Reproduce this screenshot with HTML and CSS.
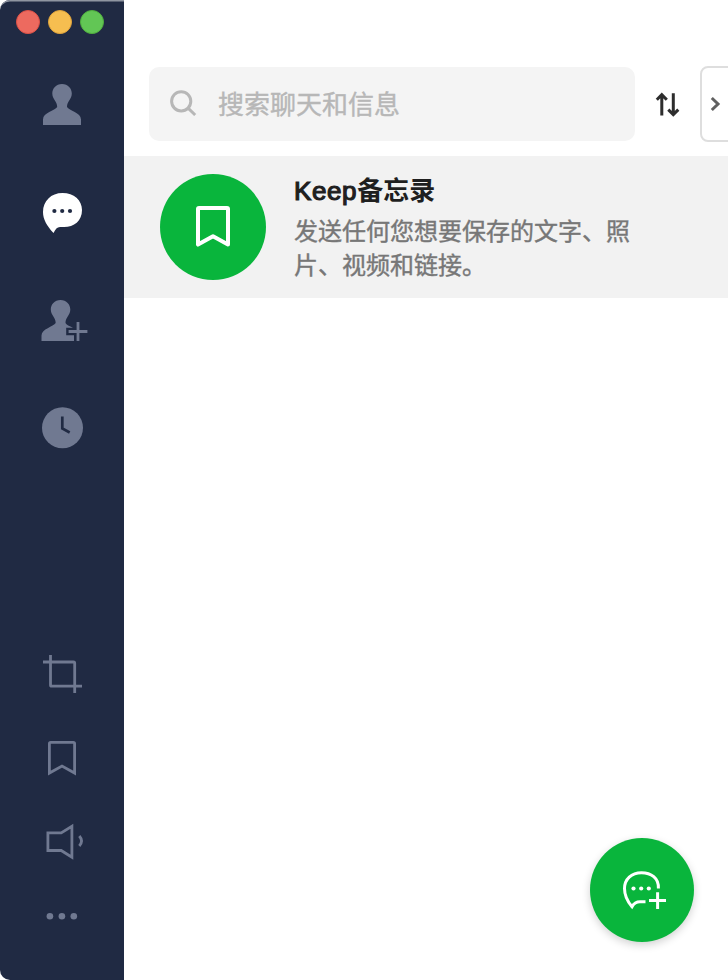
FILE: index.html
```html
<!DOCTYPE html>
<html lang="zh-CN">
<head>
<meta charset="utf-8">
<title>聊天</title>
<link rel="stylesheet" href="styles.css">
</head>
<body>
<div class="window">
  <aside class="sidebar">
    <div class="controls">
      <span class="dot close"></span><span class="dot minimize"></span><span class="dot expand"></span>
    </div>
    <nav class="nav">
      <svg class="icon" width="124" height="90" viewBox="0 60 124 90"><path class="fill" d="M62 84C68 84 71.800 88.500 71.800 93.500C71.800 99 67 101.500 67 107C69 110.500 81 112.500 81 119.500V125H43V119.500C43 112.500 55 110.500 57.200 107C57.200 101.500 52.300 99 52.300 93.500C52.300 88.500 56 84 62 84Z"/></svg>
      <svg class="icon" width="124" height="110" viewBox="0 150 124 110"><path fill="#fff" d="M62.500 193C74 193 82 200 82 210C82 221 74 227 64 227H60C57 227 55.500 229 53.500 233C47 226 43 219.500 43 212C43 201 51 193 62.500 193Z"/><g class="cut"><circle cx="54.400" cy="211" r="2.100"/><circle cx="62.200" cy="211" r="2.100"/><circle cx="70" cy="211" r="2.100"/></g></svg>
      <svg class="icon" width="124" height="120" viewBox="0 260 124 120"><path class="fill" d="M60.500 300C66.500 300 70.300 304.500 70.300 309.500C70.300 315 65.500 317.500 65.500 323C66.200 324.800 69.500 326 73 327.800H66.200V335.200H74V341H41.500V335.500C41.500 329 53.500 326.500 55.700 323C55.700 317.500 50.800 315 50.800 309.500C50.800 304.500 54.500 300 60.500 300Z"/><path class="line" d="M68.600 331.500H87.400M78 322V341"/></svg>
      <svg class="icon" width="124" height="100" viewBox="0 380 124 100"><circle class="fill" cx="62.500" cy="427.800" r="20.500"/><path class="hands" d="M62.300 416.500V428.500L69.700 432.500"/></svg>
    </nav>
    <div class="tools">
      <svg class="icon" width="124" height="80" viewBox="0 640 124 80"><path class="line" d="M43 662H73.500Q74.700 662 74.700 663.200V693M50.500 655V685Q50.500 686.200 51.700 686.200H82"/></svg>
      <svg class="icon" width="124" height="80" viewBox="0 720 124 80"><path class="line" d="M50.700 742.300H73.300Q74.600 742.300 74.600 743.600V773L62 766L49.400 773V743.600Q49.400 742.300 50.700 742.300Z"/></svg>
      <svg class="icon" width="124" height="80" viewBox="0 800 124 80"><path class="line" d="M47.900 832.900H61.200L71.900 826.300V857.300L61.200 850.500H47.900Z"/><path class="line" d="M79.300 836Q83.800 841 79.300 846"/></svg>
      <svg class="icon" width="124" height="100" viewBox="0 880 124 100"><g class="fill"><circle cx="49.900" cy="916.200" r="3.300"/><circle cx="61.900" cy="916.200" r="3.300"/><circle cx="73.800" cy="916.200" r="3.300"/></g></svg>
    </div>
  </aside>
  <main class="main">
    <header class="toolbar">
      <div class="search">
        <svg width="30" height="30" viewBox="168 88 30 30"><g fill="none" stroke="#b7b7b7" stroke-width="3"><circle cx="181.200" cy="101.300" r="9.600"/><path d="M187.800 107.900L195.200 115"/></g></svg>
        <span class="placeholder">搜索聊天和信息</span>
      </div>
      <svg class="sort" width="26" height="28" viewBox="655 90 26 28"><path fill="none" stroke="#2d2d2d" stroke-width="3" d="M661.800 115.500V95M656.800 99.700L661.800 94.700L666.800 99.700M673.300 93.200V114M668.300 109.600L673.300 114.600L678.300 109.600"/></svg>
      <div class="panel-toggle"><svg width="12" height="16" viewBox="709 96 12 16"><path fill="none" stroke="#606060" stroke-width="3" d="M711.800 98L718 104L711.800 110"/></svg></div>
    </header>
    <section class="chat">
      <div class="avatar"><svg width="40" height="46" viewBox="193 204 40 46"><path fill="none" stroke="#fff" stroke-width="4" stroke-linejoin="round" d="M199 208H227Q228 208 228 209V244.600L213 236.200L198 244.600V209Q198 208 199 208Z"/></svg></div>
      <div class="summary">
        <h1><span class="latin">Keep</span>备忘录</h1>
        <p>发送任何您想要保存的文字、照<br>片、视频和链接。</p>
      </div>
    </section>
    <button class="new-chat" aria-label="新聊天"><svg width="50" height="46" viewBox="617 867 50 46"><path fill="none" stroke="#fff" stroke-width="3" d="M658.400 888.500C659 878 651 872.700 641.500 872.700C631.500 872.700 624.500 879 624.500 888.500C624.500 896 627.500 901.500 632 906.700C634 903 636.500 901.700 640 901.700H645.500M649 900.500H666M657.600 892.300V909"/><g fill="#fff"><circle cx="633.500" cy="888.500" r="2.100"/><circle cx="641.200" cy="888.500" r="2.100"/><circle cx="648.800" cy="888.500" r="2.100"/></g></svg></button>
  </main>
</div>
</body>
</html>
```
FILE: styles.css
```css
* { box-sizing: border-box; }
body { margin: 0; background: #fff; font-family: "Liberation Sans", "Noto Sans CJK SC", sans-serif; }
.window { display: flex; width: 728px; height: 980px; overflow: hidden; }
.sidebar { display: flex; flex-direction: column; width: 124px; flex: none; background: #202a43; border-radius: 10px 0 0 10px; box-shadow: inset 0 2px 0 -0.5px #8f95a1; }
.controls { display: flex; gap: 8px; height: 60px; padding: 10px 0 0 16px; }
.dot { width: 24px; height: 24px; border-radius: 50%; border: 1px solid; }
.close { background: #ed6a5f; border-color: #dc5046; }
.minimize { background: #f6be50; border-color: #dfa33b; }
.expand { background: #62c655; border-color: #50ae3e; }
.nav, .tools { display: flex; flex-direction: column; }
.tools { margin-top: auto; }
.icon { display: block; }
.fill { fill: #707991; }
.cut { fill: #202a43; }
.line { fill: none; stroke: #707991; stroke-width: 2.8; }
.hands { fill: none; stroke: #202a43; stroke-width: 2.7; }
.main { position: relative; flex: 1; min-width: 0; overflow: hidden; }
.toolbar { display: flex; align-items: center; height: 156px; padding: 52px 0 0 25px; }
.search { display: flex; align-items: center; width: 486px; height: 74px; padding-left: 19px; gap: 20px; border-radius: 10px; background: #f4f4f4; color: #b7b7b7; font-size: 26px; line-height: 38px; flex: none; -webkit-text-stroke: 0.4px #b7b7b7; }
.search svg { margin-top: -2px; }
.placeholder { padding-top: 2px; }
.sort { flex: none; margin-left: 20px; }
.panel-toggle { display: flex; align-items: center; width: 40px; height: 76px; flex: none; margin-left: 19px; padding-left: 7px; border: 2px solid #dedede; border-radius: 8px; }
.chat { display: flex; align-items: flex-start; height: 142px; padding: 18px 0 0 36px; background: #f2f2f2; }
.avatar { display: grid; place-items: center; width: 106px; height: 106px; border-radius: 50%; background: #09b53c; }
.summary { margin-left: 28px; }
h1 { margin: 0; height: 41px; font-size: 26px; line-height: 34px; font-weight: 700; color: #1f1f1f; }
.latin { font-weight: 400; letter-spacing: 0.6px; -webkit-text-stroke: 1.2px #1f1f1f; }
p { margin: 0; font-size: 24px; line-height: 34px; color: #777; -webkit-text-stroke: 0.4px #777; white-space: nowrap; }
.new-chat { position: absolute; right: 34px; bottom: 38px; display: grid; place-items: center; width: 104px; height: 104px; padding: 0; border: 0; border-radius: 50%; background: #09b53c; box-shadow: 0 3px 8px rgba(0, 0, 0, 0.18); }
```
